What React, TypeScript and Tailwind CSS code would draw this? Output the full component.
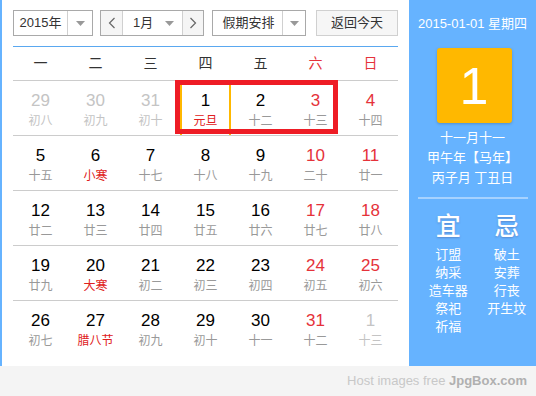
import React from 'react';

type Day = { d: number; lunar: string; other?: boolean; holiday?: boolean; today?: boolean };

const weeks: Day[][] = [
  [
    { d: 29, lunar: '初八', other: true },
    { d: 30, lunar: '初九', other: true },
    { d: 31, lunar: '初十', other: true },
    { d: 1, lunar: '元旦', holiday: true, today: true },
    { d: 2, lunar: '十二' },
    { d: 3, lunar: '十三' },
    { d: 4, lunar: '十四' },
  ],
  [
    { d: 5, lunar: '十五' },
    { d: 6, lunar: '小寒', holiday: true },
    { d: 7, lunar: '十七' },
    { d: 8, lunar: '十八' },
    { d: 9, lunar: '十九' },
    { d: 10, lunar: '二十' },
    { d: 11, lunar: '廿一' },
  ],
  [
    { d: 12, lunar: '廿二' },
    { d: 13, lunar: '廿三' },
    { d: 14, lunar: '廿四' },
    { d: 15, lunar: '廿五' },
    { d: 16, lunar: '廿六' },
    { d: 17, lunar: '廿七' },
    { d: 18, lunar: '廿八' },
  ],
  [
    { d: 19, lunar: '廿九' },
    { d: 20, lunar: '大寒', holiday: true },
    { d: 21, lunar: '初二' },
    { d: 22, lunar: '初三' },
    { d: 23, lunar: '初四' },
    { d: 24, lunar: '初五' },
    { d: 25, lunar: '初六' },
  ],
  [
    { d: 26, lunar: '初七' },
    { d: 27, lunar: '腊八节', holiday: true },
    { d: 28, lunar: '初九' },
    { d: 29, lunar: '初十' },
    { d: 30, lunar: '十一' },
    { d: 31, lunar: '十二' },
    { d: 1, lunar: '十三', other: true },
  ],
];

const weekdays = ['一', '二', '三', '四', '五', '六', '日'];
const good = ['订盟', '纳采', '造车器', '祭祀', '祈福'];
const bad = ['破土', '安葬', '行丧', '开生坟'];

const Caret = () => (
  <svg width="9" height="5" viewBox="0 0 9 5">
    <path d="M0 0h9L4.5 5z" fill="#999" />
  </svg>
);

const Chevron = ({ dir }: { dir: 'l' | 'r' }) => (
  <svg width="8" height="12" viewBox="0 0 8 12">
    <polyline
      points={dir === 'l' ? '6.5,1 1.5,6 6.5,11' : '1.5,1 6.5,6 1.5,11'}
      fill="none"
      stroke="#666"
      strokeWidth="1.2"
    />
  </svg>
);

const DayCell = ({ day, col }: { day: Day; col: number }) => {
  const weekend = col >= 5;
  let numColor = 'text-black';
  if (day.other) numColor = 'text-[#c4c4c4]';
  else if (weekend) numColor = 'text-[#e5323a]';
  let lunarColor = 'text-[#999]';
  if (day.other) lunarColor = 'text-[#c4c4c4]';
  else if (day.holiday) lunarColor = 'text-[#e02020]';

  return (
    <div
      className={`flex flex-col items-center pt-[10px] h-[54px] ${
        day.today ? 'mx-[2px] border-x-2 border-[#ffb800]' : ''
      }`}
    >
      <span className={`text-[17px] leading-[20px] ${numColor}`}>{day.d}</span>
      <span className={`text-[12px] leading-[20px] ${lunarColor}`}>{day.lunar}</span>
    </div>
  );
};

export default function App() {
  return (
    <div
      className="w-[536px] h-[396px] bg-[#f4f4f4] overflow-hidden text-[#333]"
      style={{ fontFamily: '"Liberation Sans", "Noto Sans CJK SC", sans-serif' }}
    >
      <div className="flex h-[366px]">
        {/* left: calendar */}
        <div className="w-[409px] bg-white border-l-2 border-[#66b3ff] pl-[11px] pr-[11px] pt-[10px]">
          <div className="flex items-center h-[26px] text-[13px]">
            <div className="flex w-[80px] h-full border border-[#a9a9a9]">
              <div className="flex-1 flex items-center justify-center">2015年</div>
              <div className="w-[25px] flex items-center justify-center border-l border-[#d0d0d0]">
                <Caret />
              </div>
            </div>
            <div className="flex w-[104px] h-full border border-[#a9a9a9] ml-[7px]">
              <div className="w-[22px] flex items-center justify-center bg-[#f5f5f5] border-r border-[#d0d0d0]">
                <Chevron dir="l" />
              </div>
              <div className="flex-1 flex items-center justify-between pl-[10px] pr-[8px]">
                <span>1月</span>
                <Caret />
              </div>
              <div className="w-[21px] flex items-center justify-center bg-[#f5f5f5] border-l border-[#d0d0d0]">
                <Chevron dir="r" />
              </div>
            </div>
            <div className="flex w-[94px] h-full border border-[#a9a9a9] ml-[8px]">
              <div className="flex-1 flex items-center justify-center pl-[2px]">假期安排</div>
              <div className="w-[23px] flex items-center justify-center border-l border-[#d0d0d0]">
                <Caret />
              </div>
            </div>
            <div className="w-[82px] h-full ml-[10px] border border-[#d0d0d0] bg-[#f6f6f6] flex items-center justify-center">
              返回今天
            </div>
          </div>

          <div className="mt-[10px] h-px bg-[#5aa8f0]" />

          <div className="grid grid-cols-7 h-[33px] items-center text-[14px]">
            {weekdays.map((w, i) => (
              <div key={w} className={`text-center ${i >= 5 ? 'text-[#e5323a]' : 'text-[#333]'}`}>
                {w}
              </div>
            ))}
          </div>

          <div className="relative">
            {weeks.map((week, r) => (
              <div key={r} className="grid grid-cols-7 border-t border-[#cccccc]">
                {week.map((day, c) => (
                  <DayCell key={c} day={day} col={c} />
                ))}
              </div>
            ))}
            <div className="absolute left-[162px] top-0 w-[163px] h-[54px] border-[5px] border-[#ee1c25]" />
          </div>
        </div>

        {/* right: detail panel */}
        <div className="w-[127px] bg-[#66b3ff] text-white flex flex-col items-center">
          <div className="mt-[14px] text-[13px] leading-[20px]">2015-01-01 星期四</div>
          <div className="mt-[14px] ml-[3px] w-[75px] h-[75px] rounded-[3px] bg-[#ffb800] shadow-[0_1px_3px_rgba(0,0,0,0.2)] flex items-center justify-center text-[52px] leading-none">
            1
          </div>
          <div className="mt-[5px] text-[13px] leading-[20px] text-center">
            <div>十一月十一</div>
            <div>甲午年【马年】</div>
            <div>丙子月 丁丑日</div>
          </div>
          <div className="mt-[9px] w-[110px] h-[2px] bg-[#a6d2ff]" />
          <div className="mt-[13px] flex w-full">
            <div className="flex-1 flex flex-col items-center pl-[10px]">
              <div className="text-[25px] leading-[28px] font-medium [text-shadow:0_1px_2px_rgba(60,60,120,0.35)]">宜</div>
              <div className="mt-[6px] flex flex-col items-center text-[13px] leading-[18px]">
                {good.map(g => (
                  <span key={g}>{g}</span>
                ))}
              </div>
            </div>
            <div className="flex-1 flex flex-col items-center">
              <div className="text-[25px] leading-[28px] font-medium [text-shadow:0_1px_2px_rgba(60,60,120,0.35)]">忌</div>
              <div className="mt-[6px] flex flex-col items-center text-[13px] leading-[18px]">
                {bad.map(b => (
                  <span key={b}>{b}</span>
                ))}
              </div>
            </div>
          </div>
        </div>
      </div>

      <div className="h-[30px] flex items-center justify-end pr-[9px] text-[13px]">
        <span className="text-[#c8c8c8]">Host images free&nbsp;</span>
        <span className="text-[#b0b0b0] font-bold">JpgBox.com</span>
      </div>
    </div>
  );
}
